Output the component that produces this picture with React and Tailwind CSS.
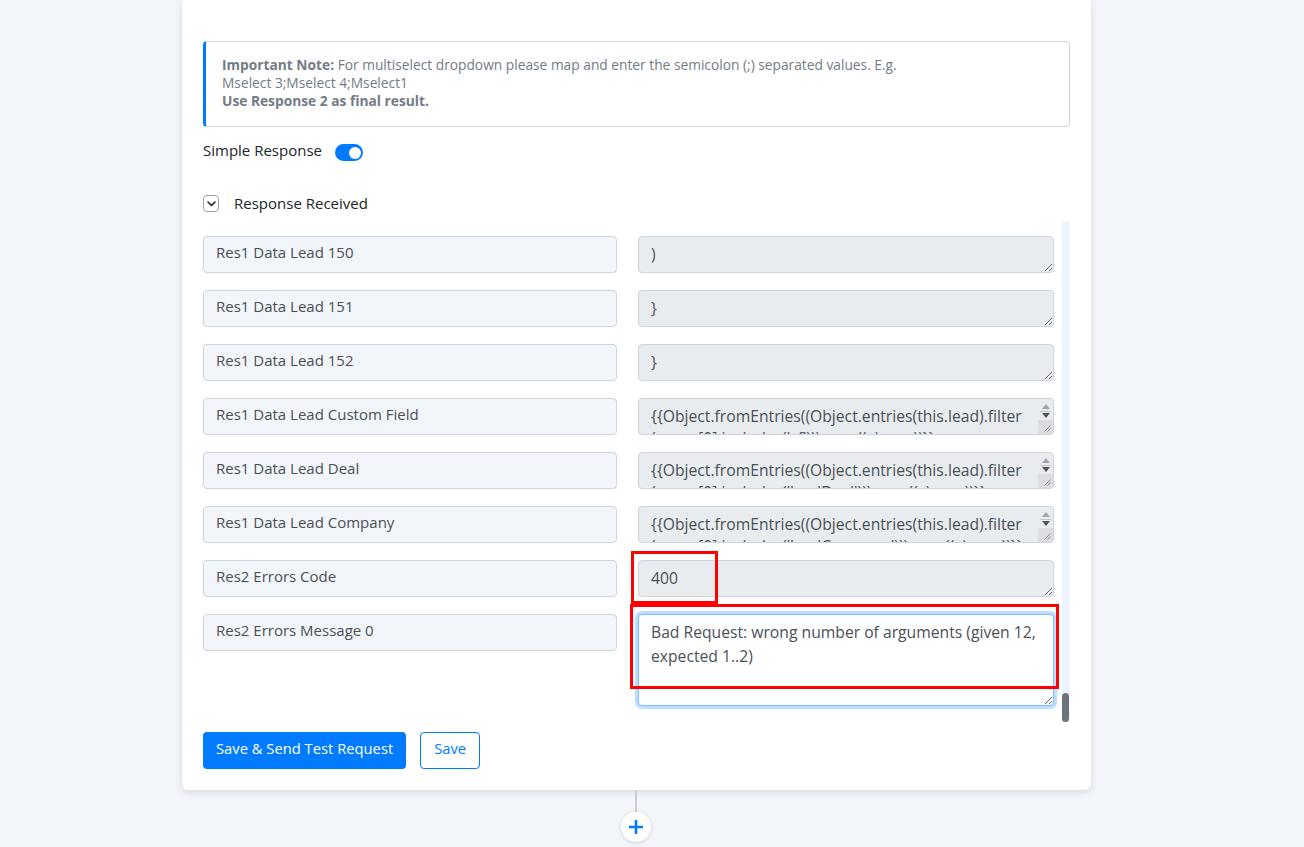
const font = "font-['Open_Sans','Liberation_Sans',sans-serif]";

const rows = [
    { label: "Res1 Data Lead 150", value: ")" },
    { label: "Res1 Data Lead 151", value: "}" },
    { label: "Res1 Data Lead 152", value: "}" },
    {
        label: "Res1 Data Lead Custom Field",
        value: "{{Object.fromEntries((Object.entries(this.lead).filter\n(x => x[0].includes('cf'))).map((x) => x))}}",
        scroll: true,
    },
    {
        label: "Res1 Data Lead Deal",
        value: "{{Object.fromEntries((Object.entries(this.lead).filter\n(x => x[0].includes('leadDeal'))).map((x) => x))}}",
        scroll: true,
    },
    {
        label: "Res1 Data Lead Company",
        value: "{{Object.fromEntries((Object.entries(this.lead).filter\n(x => x[0].includes('leadCompany'))).map((x) => x))}}",
        scroll: true,
    },
    { label: "Res2 Errors Code", value: "400" },
];

// small native-looking scrollbar for a textarea whose text overflows
function TextareaScrollbar() {
    return (
        <div className="pointer-events-none absolute right-[1px] top-[1px] bottom-[1px] w-[15px] flex flex-col rounded-r">
            <div className="h-[10px] flex items-end justify-center">
                <svg width="8" height="5" viewBox="0 0 8 5"><path d="M4 0L8 5H0z" fill="#a3a6aa" /></svg>
            </div>
            <div className="mx-[2px] mt-[2px] h-px bg-[#c4c7cb]" />
            <div className="h-[9px] flex items-center justify-center">
                <svg width="8" height="5" viewBox="0 0 8 5"><path d="M0 0h8L4 5z" fill="#505357" /></svg>
            </div>
            <div className="mt-auto h-[14px] bg-[#dcdde0] rounded-br flex items-end justify-end p-[2px]">
                <svg width="7" height="7" viewBox="0 0 7 7">
                    <path d="M6.5 0.5L0.5 6.5M6.5 3.5L3.5 6.5" stroke="#7d8085" strokeWidth="0.9" />
                </svg>
            </div>
        </div>
    );
}

function LabelBox({ children }) {
    return (
        <div className="w-[414px] h-[37px] shrink-0 rounded border border-[#cdd4de] bg-[#f2f5f9] px-[12px] pt-[4px] text-[15px] leading-[22px] text-[#4a4f57]">
            {children}
        </div>
    );
}

function MapRow({ label, value, scroll }) {
    return (
        <div className="flex gap-[21px]">
            <LabelBox>{label}</LabelBox>
            <div className="relative w-[416px] h-[37px] shrink-0">
                <textarea
                    readOnly
                    value={value}
                    className={`w-full h-full rounded border border-[#cdd4de] bg-[#e9ecef] pl-[12px] ${scroll ? "pr-[20px] resize-none" : "pr-[12px]"} pt-[6px] text-[15.7px] leading-[22px] text-[#495057] outline-none overflow-hidden`}
                />
                {scroll && <TextareaScrollbar />}
            </div>
        </div>
    );
}

export default function App() {
    return (
        <div className={`relative min-h-screen bg-[#f2f5f9] ${font}`}>
            <div className="ml-[182px] w-[909px] bg-white rounded-b-md shadow-[0_2px_6px_rgba(0,0,0,0.12)] px-[21px] pt-[41px] pb-[21px]">
                {/* Note */}
                <div className="h-[86px] rounded border border-[#cfd6e0] border-l-[3px] border-l-[#007bff] pl-[16px] pt-[14px] text-[13.75px] leading-[18px] text-[#737b86]">
                    <p>
                        <b className="font-bold">Important Note:</b> For multiselect dropdown please map and enter the semicolon (;) separated values. E.g.
                    </p>
                    <p>Mselect 3;Mselect 4;Mselect1</p>
                    <p className="font-bold">Use Response 2 as final result.</p>
                </div>

                {/* Simple response toggle */}
                <div className="mt-[12px] flex items-center h-[22px]">
                    <span className="text-[15px] text-[#212529]">Simple Response</span>
                    <span className="ml-[13px] mt-[5px] w-[28px] h-[17px] rounded-full bg-[#007bff] flex items-center justify-end pr-[2px]">
                        <span className="w-[12px] h-[12px] rounded-full bg-white" />
                    </span>
                </div>

                {/* Collapsible header */}
                <div className="mt-[33px] flex items-center h-[19px]">
                    <span className="w-[16px] h-[17px] rounded border border-[#9aa1aa] flex items-center justify-center">
                        <svg width="9" height="6" viewBox="0 0 9 6" fill="none">
                            <path d="M1 1l3.5 3.5L8 1" stroke="#212529" strokeWidth="1.6" strokeLinecap="round" strokeLinejoin="round" />
                        </svg>
                    </span>
                    <span className="ml-[15px] text-[15px] text-[#212529]">Response Received</span>
                </div>

                {/* Mapping list with its scrollbar */}
                <div className="mt-[9px] h-[500px] flex">
                    <div className="flex-1 pt-[14px] flex flex-col gap-[17px]">
                        {rows.map((row) => (
                            <MapRow key={row.label} {...row} />
                        ))}
                        <div className="flex gap-[21px]">
                            <LabelBox>Res2 Errors Message 0</LabelBox>
                            <textarea
                                readOnly
                                value="Bad Request: wrong number of arguments (given 12, expected 1..2)"
                                className="w-[416px] h-[92px] shrink-0 rounded border border-[#80bdff] bg-white pl-[12px] pr-[10px] pt-[5px] text-[15.7px] leading-[24px] text-[#495057] outline-none shadow-[0_0_0_3px_rgba(0,123,255,0.25)]"
                            />
                        </div>
                    </div>
                    <div className="w-[8px] bg-[#edf4fd] flex flex-col justify-end">
                        <div className="h-[29px] w-[7px] rounded-full bg-[#6c737b]" />
                    </div>
                </div>

                {/* Actions */}
                <div className="mt-[10px] flex gap-[14px]">
                    <button className="h-[37px] px-[13px] pb-[4px] rounded bg-[#007bff] text-white text-[14.75px]">
                        Save &amp; Send Test Request
                    </button>
                    <button className="h-[37px] px-[13px] pb-[4px] rounded border border-[#007bff] bg-white text-[#007bff] text-[14.75px]">
                        Save
                    </button>
                </div>
            </div>

            {/* Highlight marks over the error response */}
            <div className="pointer-events-none absolute left-[631px] top-[551px] w-[87px] h-[53px] border-[3px] border-[#f00]" />
            <div className="pointer-events-none absolute left-[630px] top-[604px] w-[429px] h-[85px] border-[3px] border-[#f00]" />

            {/* Connector to next step */}
            <div className="ml-[635px] w-[2px] h-[22px] bg-[#c9cdd3]" />
            <div className="ml-[621px] w-[30px] h-[30px] rounded-full bg-white shadow-[0_1px_4px_rgba(0,0,0,0.15)] flex items-center justify-center">
                <svg width="14" height="14" viewBox="0 0 14 14">
                    <path d="M7 1v12M1 7h12" stroke="#007bff" strokeWidth="2.6" strokeLinecap="round" />
                </svg>
            </div>
        </div>
    );
}
